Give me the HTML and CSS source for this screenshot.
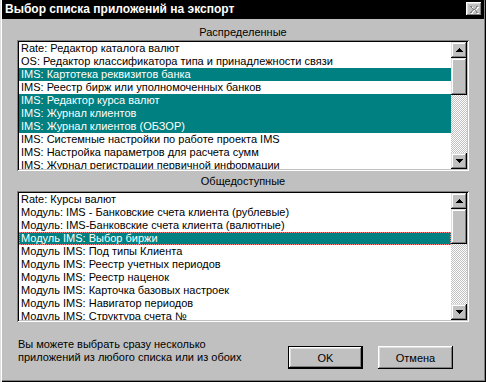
FILE: index.html
```html
<!DOCTYPE html>
<html lang="ru">
<head>
    <meta charset="UTF-8">
    <title>Выбор списка приложений на экспорт</title>
    <link rel="stylesheet" href="styles.css">
</head>
<body>
    <div class="window">
        <div class="titlebar">
            <span class="title">Выбор списка приложений на экспорт</span>
            <span class="close-btn">
                <svg width="8" height="7" viewBox="0 0 8 7">
                    <path d="M1 1h1v1h-1zM2 2h1v1h-1zM3 3h2v1h-2zM5 2h1v1h-1zM6 1h1v1h-1zM2 4h1v1h-1zM1 5h1v1h-1zM5 4h1v1h-1zM6 5h1v1h-1zM0 0h2v1h-2zM6 0h2v1h-2zM0 6h2v1h-2zM6 6h2v1h-2z" fill="#808080"/>
                </svg>
            </span>
        </div>

        <div class="content">
            <div class="caption caption-first">Распределенные</div>
            <div class="listbox">
                <div class="items">
                    <div class="item">Rate: Редактор каталога валют</div>
                    <div class="item">OS: Редактор классификатора типа и принадлежности связи</div>
                    <div class="item selected">IMS: Картотека реквизитов банка</div>
                    <div class="item">IMS: Реестр бирж или уполномоченных банков</div>
                    <div class="item selected">IMS: Редактор курса валют</div>
                    <div class="item selected">IMS: Журнал клиентов</div>
                    <div class="item selected">IMS: Журнал клиентов (ОБЗОР)</div>
                    <div class="item">IMS: Системные настройки по работе проекта IMS</div>
                    <div class="item">IMS: Настройка параметров для расчета сумм</div>
                    <div class="item">IMS: Журнал регистрации первичной информации</div>
                </div>
                <div class="scrollbar">
                    <div class="sb-btn">
                        <svg width="7" height="4" viewBox="0 0 7 4"><path d="M3 0h1v1h1v1h1v1h1v1h-7v-1h1v-1h1v-1h1z" fill="#000"/></svg>
                    </div>
                    <div class="sb-track">
                        <div class="sb-thumb" style="height: 37px"></div>
                    </div>
                    <div class="sb-btn">
                        <svg width="7" height="4" viewBox="0 0 7 4"><path d="M0 0h7v1h-1v1h-1v1h-1v1h-1v-1h-1v-1h-1v-1h-1z" fill="#000"/></svg>
                    </div>
                </div>
            </div>

            <div class="caption caption-second">Общедоступные</div>
            <div class="listbox">
                <div class="items">
                    <div class="item">Rate: Курсы валют</div>
                    <div class="item">Модуль: IMS - Банковские счета клиента (рублевые)</div>
                    <div class="item">Модуль: IMS-Банковские счета клиента (валютные)</div>
                    <div class="item selected focused">Модуль IMS: Выбор биржи</div>
                    <div class="item">Модуль IMS: Под типы Клиента</div>
                    <div class="item">Модуль IMS: Реестр учетных периодов</div>
                    <div class="item">Модуль IMS: Реестр наценок</div>
                    <div class="item">Модуль IMS: Карточка базовых настроек</div>
                    <div class="item">Модуль IMS: Навигатор периодов</div>
                    <div class="item">Модуль IMS: Структура счета №</div>
                </div>
                <div class="scrollbar">
                    <div class="sb-btn">
                        <svg width="7" height="4" viewBox="0 0 7 4"><path d="M3 0h1v1h1v1h1v1h1v1h-7v-1h1v-1h1v-1h1z" fill="#000"/></svg>
                    </div>
                    <div class="sb-track">
                        <div class="sb-thumb" style="height: 35px"></div>
                    </div>
                    <div class="sb-btn">
                        <svg width="7" height="4" viewBox="0 0 7 4"><path d="M0 0h7v1h-1v1h-1v1h-1v1h-1v-1h-1v-1h-1v-1h-1z" fill="#000"/></svg>
                    </div>
                </div>
            </div>
        </div>

        <div class="footer">
            <p class="hint">Вы можете выбрать сразу несколько<br>приложений из любого списка или из обоих</p>
            <div class="buttons">
                <button class="btn btn-default">OK</button>
                <button class="btn">Отмена</button>
            </div>
        </div>
    </div>
</body>
</html>
```

FILE: styles.css
```css
body {
    margin: 0;
    font-family: "Liberation Sans", Arial, sans-serif;
    font-size: 11px;
    color: #000000;
}

.window {
    width: 486px;
    height: 382px;
    box-sizing: border-box;
    padding: 0 2px 2px 2px;
    background-color: #c0c0c0;
    box-shadow: inset 1px 0 #dfdfdf, inset 2px 0 #ffffff, inset -1px -1px #000000, inset -2px -2px #808080;
    display: flex;
    flex-direction: column;
}

.titlebar {
    height: 19px;
    background-color: #000000;
    display: flex;
    justify-content: space-between;
    align-items: flex-start;
    padding: 0 2px 0 3px;
}

.title {
    color: #ffffff;
    font-weight: bold;
    font-size: 12px;
    line-height: 19px;
}

.close-btn {
    width: 16px;
    height: 14px;
    margin-top: 2px;
    box-sizing: border-box;
    background-color: #c0c0c0;
    box-shadow: inset -1px -1px #000000, inset 1px 1px #ffffff, inset -2px -2px #808080, inset 2px 2px #dfdfdf;
    display: flex;
    justify-content: center;
    align-items: center;
}

.close-btn svg {
    filter: drop-shadow(1px 1px 0 #ffffff);
}

.content {
    padding: 0 15px;
}

.caption {
    text-align: center;
    line-height: 13px;
}

.caption-first {
    padding: 7px 0 1px;
}

.caption-second {
    padding: 4px 0 3px;
}

.listbox {
    height: 131px;
    box-sizing: border-box;
    background-color: #ffffff;
    box-shadow: inset 1px 1px #808080, inset -1px -1px #ffffff, inset 2px 2px #000000, inset -2px -2px #c0c0c0;
    padding: 2px;
    display: flex;
}

.items {
    flex: 1;
    overflow: hidden;
}

.item {
    height: 13px;
    line-height: 13px;
    padding-left: 2px;
    white-space: nowrap;
    overflow: hidden;
}

.item.selected {
    background-color: #008080;
    color: #ffffff;
}

.item.focused {
    outline: 1px dotted #ff8080;
    outline-offset: -1px;
}

.scrollbar {
    width: 16px;
    display: flex;
    flex-direction: column;
}

.sb-btn, .sb-thumb {
    background-color: #c0c0c0;
    box-shadow: inset -1px -1px #000000, inset 1px 1px #dfdfdf, inset -2px -2px #808080, inset 2px 2px #ffffff;
}

.sb-btn {
    height: 16px;
    display: flex;
    justify-content: center;
    align-items: center;
}

.sb-track {
    flex: 1;
    background: repeating-conic-gradient(#ffffff 0 25%, #c0c0c0 0 50%) 0 0 / 2px 2px;
}

.footer {
    flex: 1;
    display: flex;
    padding: 0 31px 0 16px;
}

.hint {
    margin: 16px 0 0;
    line-height: 13px;
}

.buttons {
    margin: 24px 0 0 auto;
    display: flex;
    gap: 15px;
}

.btn {
    width: 75px;
    height: 23px;
    padding: 0;
    border: none;
    font-family: "Liberation Sans", Arial, sans-serif;
    font-size: 11px;
    color: #000000;
    background-color: #c0c0c0;
    box-shadow: inset -1px -1px #000000, inset 1px 1px #ffffff, inset -2px -2px #808080, inset 2px 2px #dfdfdf;
}

.btn-default {
    box-shadow: inset 0 0 0 1px #000000, inset -2px -2px #000000, inset 2px 2px #ffffff, inset -3px -3px #808080, inset 3px 3px #dfdfdf;
}
```
